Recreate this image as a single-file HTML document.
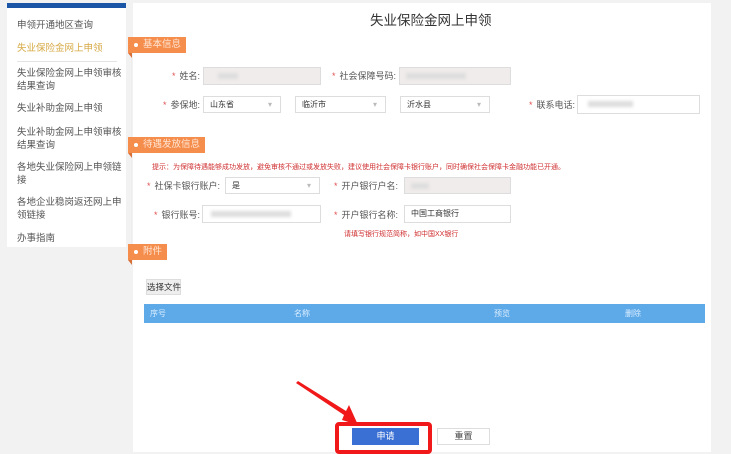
<!DOCTYPE html>
<html><head><meta charset="utf-8"><style>
*{margin:0;padding:0;box-sizing:border-box}
body{width:731px;height:452px;background:#f2f2f2;position:relative;overflow:hidden;font-family:"Liberation Sans","Noto Sans CJK SC",sans-serif;color:#444}
.a{position:absolute;white-space:nowrap}
.side{left:7px;top:3px;width:119px;height:244px;background:#fff;border-top:5px solid #1b56a6}
.si{position:absolute;white-space:normal;left:10px;font-size:9.5px;line-height:13px;color:#555;width:106px}
.main{left:133px;top:3px;width:578px;height:449px;background:#fff}
.tag{position:absolute;white-space:nowrap;background:#f58d4c;font-size:9.5px;height:16px;line-height:16px;padding-left:15px;padding-right:5px;color:#ffe6d4}
.tag:before{content:"";position:absolute;left:6px;top:6px;width:4px;height:4px;border-radius:2px;background:#fff}
.tag:after{content:"";position:absolute;left:0;top:16px;border-top:5px solid #d8703a;border-left:4px solid transparent;width:0}
.lb{position:absolute;white-space:nowrap;font-size:9px;color:#555;text-align:right;line-height:12px}
.lb b{color:#e05050;font-weight:normal;margin-right:4px}
.in{position:absolute;border:1px solid #ddd;background:#fff;font-size:8px;line-height:16px;padding-left:6px;color:#333}
.g{background:#f1ecec}
.sel:after{content:"▾";position:absolute;right:8px;top:0;color:#bbb;font-size:8px}
.blur{position:absolute;top:5px;height:6px;background:#ddd;filter:blur(1.5px)}
.red{position:absolute;white-space:nowrap;font-size:7px;color:#d03030}
</style></head><body>
<div class="a side">
<div class="si" style="top:11px">申领开通地区查询</div>
<div class="si" style="top:34px;color:#d6a944">失业保险金网上申领</div>
<div class="a" style="left:10px;top:53px;width:100px;height:1px;background:#e4e4e4"></div>
<div class="si" style="top:59px">失业保险金网上申领审核结果查询</div>
<div class="si" style="top:94px">失业补助金网上申领</div>
<div class="si" style="top:118px">失业补助金网上申领审核结果查询</div>
<div class="si" style="top:153px">各地失业保险网上申领链接</div>
<div class="si" style="top:188px">各地企业稳岗返还网上申领链接</div>
<div class="si" style="top:224px">办事指南</div>
</div>
<div class="a main"></div>
<div class="a" style="left:131px;top:53px;width:1px;height:200px;background:#eee"></div>
<div class="a" style="left:370px;top:9px;font-size:13.5px;color:#333">失业保险金网上申领</div>
<div class="tag" style="left:128px;top:37px">基本信息</div>
<div class="tag" style="left:128px;top:137px">待遇发放信息</div>
<div class="tag" style="left:128px;top:244px">附件</div>

<div class="lb" style="left:150px;top:70px;width:50px"><b>*</b>姓名:</div>
<div class="in g" style="left:203px;top:67px;width:118px;height:18px"><div class="blur" style="left:14px;width:20px"></div></div>
<div class="lb" style="left:320px;top:70px;width:76px"><b>*</b>社会保障号码:</div>
<div class="in g" style="left:399px;top:67px;width:112px;height:18px"><div class="blur" style="left:6px;width:60px"></div></div>

<div class="lb" style="left:150px;top:99px;width:50px"><b>*</b>参保地:</div>
<div class="in sel" style="left:203px;top:96px;width:78px;height:17px">山东省</div>
<div class="in sel" style="left:295px;top:96px;width:91px;height:17px">临沂市</div>
<div class="in sel" style="left:400px;top:96px;width:90px;height:17px">沂水县</div>
<div class="lb" style="left:515px;top:99px;width:60px"><b>*</b>联系电话:</div>
<div class="in" style="left:577px;top:95px;width:123px;height:19px"><div class="blur" style="left:10px;width:45px"></div></div>

<div class="red" style="left:152px;top:162px">提示：为保障待遇能够成功发放，避免审核不通过或发放失败，建议使用社会保障卡银行账户，同时确保社会保障卡金融功能已开通。</div>
<div class="lb" style="left:140px;top:180px;width:80px"><b>*</b>社保卡银行账户:</div>
<div class="in sel" style="left:225px;top:177px;width:95px;height:17px">是</div>
<div class="lb" style="left:330px;top:180px;width:68px"><b>*</b>开户银行户名:</div>
<div class="in g" style="left:404px;top:177px;width:107px;height:17px"><div class="blur" style="left:6px;width:18px"></div></div>
<div class="lb" style="left:140px;top:209px;width:60px"><b>*</b>银行账号:</div>
<div class="in" style="left:202px;top:205px;width:119px;height:18px"><div class="blur" style="left:8px;width:80px"></div></div>
<div class="lb" style="left:330px;top:209px;width:68px"><b>*</b>开户银行名称:</div>
<div class="in" style="left:404px;top:205px;width:107px;height:18px">中国工商银行</div>
<div class="red" style="left:344px;top:229px">请填写银行规范简称，如中国XX银行</div>

<div class="a" style="left:146px;top:279px;width:35px;height:16px;background:#eee;border:1px solid #ddd;font-size:8.5px;line-height:14px;text-align:center;color:#333">选择文件</div>
<div class="a" style="left:144px;top:304px;width:561px;height:19px;background:#5ea9e8;font-size:8px;color:#dbeeff;line-height:19px">
<span class="a" style="left:6px">序号</span><span class="a" style="left:150px">名称</span><span class="a" style="left:350px">预览</span><span class="a" style="left:481px">删除</span></div>

<div class="a" style="left:335px;top:422px;width:97px;height:32px;border:4px solid #f01818;border-radius:4px"></div>
<div class="a" style="left:352px;top:428px;width:67px;height:17px;background:#3a6fd4;color:#fff;font-size:9px;line-height:17px;text-align:center">申请</div>
<div class="a" style="left:437px;top:428px;width:53px;height:17px;border:1px solid #ddd;background:#fff;font-size:9px;line-height:15px;text-align:center;color:#444">重置</div>
<svg class="a" style="left:0;top:0" width="731" height="452"><polygon points="296,383 298,381 346,411 349,405 358,425 342,420 344,415" fill="#f01818"/></svg>
</body></html>
